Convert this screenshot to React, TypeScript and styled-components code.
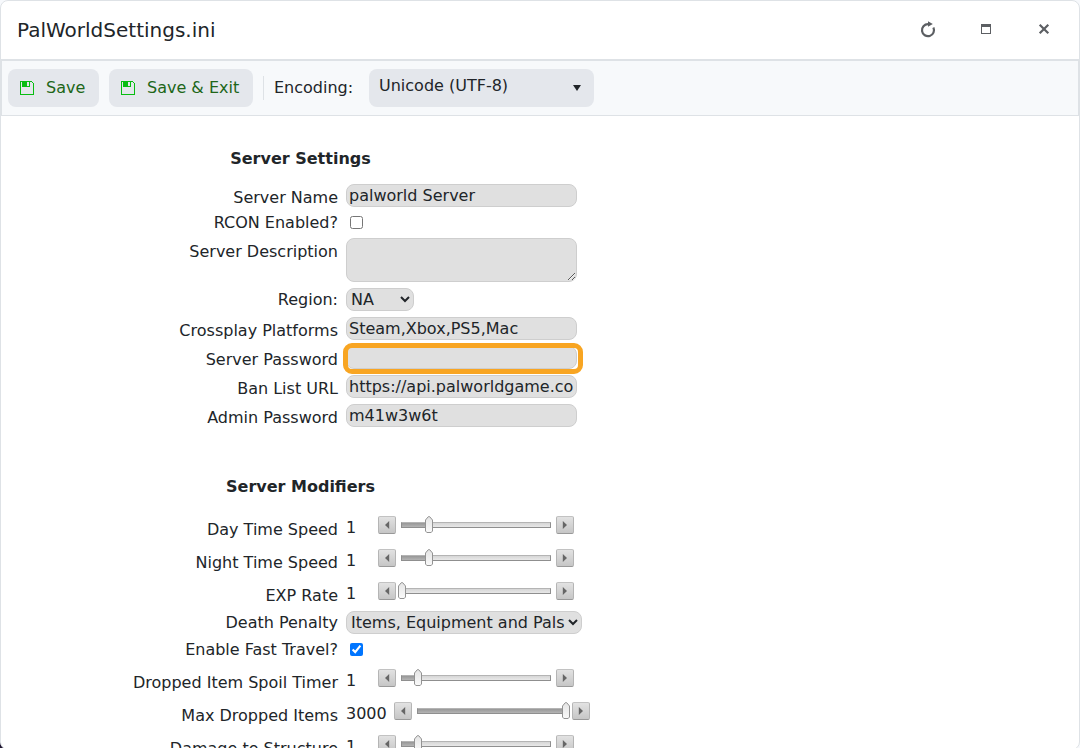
import React from "react";
import styled, { createGlobalStyle } from "styled-components";

const GlobalStyle = createGlobalStyle`
  *, *::before, *::after { box-sizing: border-box; }
  html, body { margin: 0; height: 748px; overflow: hidden; }
  body {
    background: linear-gradient(#f7f9fc 0 50%, transparent 50%), linear-gradient(90deg, #1f1530 50%, #f7f9fc 50%);
    color: #212529;
    font: 16px/24px "DejaVu Sans", sans-serif;
  }
  input, select, textarea, button { font: inherit; color: inherit; margin: 0; }
`;

const Window = styled.div`
  height: 750px;
  background: #fff;
  border: 1px solid #dee2e6;
  border-radius: 8px;
  overflow: hidden;
`;

const Header = styled.header`
  display: flex;
  align-items: center;
  justify-content: space-between;
  height: 59px;
  padding: 0 21px 1px 16px;
  border-bottom: 1px solid #dee2e6;
`;

const Title = styled.h5`
  margin: 0;
  font-size: 20px;
  line-height: 30px;
  font-weight: 400;
`;

const WindowActions = styled.div`
  display: flex;
  gap: 30px;
`;

const WindowButton = styled.button`
  display: flex;
  width: 28px;
  height: 28px;
  padding: 0;
  border: 0;
  background: none;
  svg { display: block; }
`;

const Toolbar = styled.div`
  display: flex;
  align-items: center;
  height: 56px;
  padding: 0 6px;
  background: #f7f9fb;
  border: 1px solid #dee2e6;
`;

const ToolButton = styled.button<{ $width: number }>`
  display: flex;
  align-items: center;
  flex: none;
  width: ${(p) => p.$width}px;
  height: 38px;
  margin-right: 10px;
  padding: 0 0 1px 12px;
  border: 0;
  border-radius: 8px;
  background: #e4e7ec;
  color: #206618;
  white-space: nowrap;
  svg { margin: 1px 12px 0 0; flex: none; }
`;

const Divider = styled.span`
  width: 1px;
  height: 24px;
  margin-right: 10px;
  background: #dee2e6;
`;

const EncodingLabel = styled.span`
  width: 95px;
  padding-bottom: 1px;
`;

const EncodingPicker = styled.div`
  display: flex;
  justify-content: space-between;
  align-items: center;
  width: 225px;
  height: 38px;
  padding: 0 12px 0 10px;
  border-radius: 8px;
  background: #e4e7ec;
  span { padding-bottom: 4px; }
`;

const Form = styled.main`
  padding-top: 31px;
`;

const SectionTitle = styled.h6<{ $space: number }>`
  width: 599px;
  margin: 0 0 ${(p) => p.$space}px;
  font-size: 16px;
  line-height: 24px;
  font-weight: 700;
  text-align: center;
`;

const Row = styled.div<{ $height: number }>`
  display: flex;
  align-items: flex-start;
  height: ${(p) => p.$height}px;
`;

const Label = styled.label<{ $drop: number }>`
  width: 337px;
  margin-right: 8px;
  padding-top: ${(p) => p.$drop}px;
  text-align: right;
  white-space: nowrap;
`;

const TextInput = styled.input`
  display: block;
  width: 231px;
  height: 23px;
  padding: 1px 2px;
  border: 1px solid #cecece;
  border-radius: 8px;
  background: #e0e0e0;
`;

const TextArea = styled.textarea`
  width: 231px;
  height: 44px;
  border: 1px solid #cecece;
  border-radius: 8px;
  background: #e0e0e0;
`;

const Select = styled.select<{ $width: number }>`
  width: ${(p) => p.$width}px;
  height: 23px;
  margin-top: 1px;
  border: 1px solid #cecece;
  border-radius: 8px;
  background: #e0e0e0;
`;

const Checkbox = styled.input`
  width: 13px;
  height: 13px;
  margin: 6px 0 0 4px;
`;

const Highlight = styled.div`
  position: relative;
  &::after {
    content: "";
    position: absolute;
    inset: -3px -6px -5px -3px;
    border: 5px solid #f8a522;
    border-radius: 9px;
    pointer-events: none;
  }
`;

const SliderValue = styled.span<{ $width: number }>`
  width: ${(p) => p.$width}px;
  padding-top: 1px;
`;

const SliderBox = styled.div`
  display: flex;
  align-items: center;
  gap: 5px;
  height: 18px;
  margin-top: 1px;
`;

const StepButton = styled.button`
  display: flex;
  align-items: center;
  justify-content: center;
  width: 18px;
  height: 18px;
  padding: 0;
  border: 1px solid;
  border-color: #c2c2c2 #b5b5b5 #999 #b5b5b5;
  border-radius: 2px;
  background: linear-gradient(#e2e2e2, #c6c6c6);
`;

const Track = styled.div`
  position: relative;
  width: 150px;
  height: 6px;
  border: 1px solid;
  border-color: #b4b4b4 #8f8f8f #8f8f8f;
  background: linear-gradient(#d6d6d6, #e8e8e8);
`;

const Fill = styled.div`
  height: 4px;
  background: linear-gradient(#979797, #b4b4b4);
`;

const Handle = styled.svg`
  position: absolute;
  top: -7px;
`;

function SaveIcon() {
  return (
    <svg width="14" height="14" viewBox="0 0 14 14" shapeRendering="crispEdges">
      <path d="M.5.5h11l2 2v11H.5z" fill="none" stroke="#08bd12" />
      <path d="M2 1h8v5H2z" fill="#08bd12" />
      <path d="M7 1h2v4H7z" fill="#e4e7ec" />
    </svg>
  );
}

function Slider({ value, position, valueWidth = 32 }: { value: number; position: number; valueWidth?: number }) {
  return (
    <>
      <SliderValue $width={valueWidth}>{value}</SliderValue>
      <SliderBox>
        <StepButton aria-label="Decrease">
          <svg width="6" height="10" viewBox="0 0 6 10">
            <path d="M5.2 1v8L1 5z" fill="#666" />
          </svg>
        </StepButton>
        <Track>
          <Fill style={{ width: position }} />
          <Handle width="8" height="17" viewBox="0 0 8 17" style={{ left: position - 4 }}>
            <defs>
              <linearGradient id="handle" x2="0" y2="1">
                <stop stopColor="#e4e4e4" />
                <stop offset="1" stopColor="#fafafa" />
              </linearGradient>
            </defs>
            <path d="M.5 4 3.2.8Q4 .2 4.8.8L7.5 4v11l-1.3 1.5H1.8L.5 15z" fill="url(#handle)" stroke="#939393" />
          </Handle>
        </Track>
        <StepButton aria-label="Increase">
          <svg width="6" height="10" viewBox="0 0 6 10">
            <path d="M.8 1v8L5 5z" fill="#666" />
          </svg>
        </StepButton>
      </SliderBox>
    </>
  );
}

function Field({ label, height, drop = 1, children }: { label: string; height: number; drop?: number; children: React.ReactNode }) {
  return (
    <Row $height={height}>
      <Label $drop={drop}>{label}</Label>
      {children}
    </Row>
  );
}

export default function App() {
  return (
    <>
      <GlobalStyle />
      <Window>
        <Header>
          <Title>PalWorldSettings.ini</Title>
          <WindowActions>
            <WindowButton aria-label="Reload">
              <svg width="28" height="28" viewBox="0 0 28 28" fill="none" stroke="#5c5f63" strokeWidth="2.2">
                <path d="M14 8.2A6 6 0 1 0 19.4 11.6" />
                <path d="M14 5.2v5.6L18.8 8z" fill="#5c5f63" stroke="none" />
              </svg>
            </WindowButton>
            <WindowButton aria-label="Maximize">
              <svg width="28" height="28" viewBox="0 0 28 28" shapeRendering="crispEdges">
                <path d="M9.5 8.5h9v9h-9z" fill="none" stroke="#5c5f63" />
                <path d="M9 8h10v3H9z" fill="#5c5f63" />
              </svg>
            </WindowButton>
            <WindowButton aria-label="Close">
              <svg width="28" height="28" viewBox="0 0 28 28">
                <path d="m9.7 8.7 8.6 8.6m0-8.6-8.6 8.6" stroke="#5c5f63" strokeWidth="2.2" />
              </svg>
            </WindowButton>
          </WindowActions>
        </Header>
        <Toolbar>
          <ToolButton $width={91}><SaveIcon />Save</ToolButton>
          <ToolButton $width={144}><SaveIcon />Save &amp; Exit</ToolButton>
          <Divider />
          <EncodingLabel>Encoding:</EncodingLabel>
          <EncodingPicker>
            <span>Unicode (UTF-8)</span>
            <svg width="10" height="6" viewBox="0 0 10 6"><path d="M1 0h8L5 6z" fill="#212529" /></svg>
          </EncodingPicker>
        </Toolbar>
        <Form>
          <SectionTitle $space={13}>Server Settings</SectionTitle>
          <Field label="Server Name" height={26} drop={2}><TextInput defaultValue="palworld Server" /></Field>
          <Field label="RCON Enabled?" height={28}><Checkbox type="checkbox" /></Field>
          <Field label="Server Description" height={49} drop={2}><TextArea /></Field>
          <Field label="Region:" height={30}>
            <Select $width={68}><option>NA</option></Select>
          </Field>
          <Field label="Crossplay Platforms" height={29} drop={2}><TextInput defaultValue="Steam,Xbox,PS5,Mac" /></Field>
          <Field label="Server Password" height={29} drop={2}>
            <Highlight><TextInput /></Highlight>
          </Field>
          <Field label="Ban List URL" height={29} drop={2}><TextInput defaultValue="https://api.palworldgame.co" /></Field>
          <Field label="Admin Password" height={71} drop={2}><TextInput defaultValue="m41w3w6t" /></Field>
          <SectionTitle $space={16}>Server Modifiers</SectionTitle>
          <Field label="Day Time Speed" height={33} drop={3}><Slider value={1} position={27} /></Field>
          <Field label="Night Time Speed" height={33} drop={3}><Slider value={1} position={27} /></Field>
          <Field label="EXP Rate" height={29} drop={3}><Slider value={1} position={0} /></Field>
          <Field label="Death Penalty" height={27}>
            <Select $width={236}><option>Items, Equipment and Pals</option></Select>
          </Field>
          <Field label="Enable Fast Travel?" height={31}><Checkbox type="checkbox" defaultChecked /></Field>
          <Field label="Dropped Item Spoil Timer" height={33} drop={3}><Slider value={1} position={16} /></Field>
          <Field label="Max Dropped Items" height={33} drop={3}><Slider value={3000} position={148} valueWidth={48} /></Field>
          <Field label="Damage to Structure" height={33} drop={3}><Slider value={1} position={16} /></Field>
        </Form>
      </Window>
    </>
  );
}
